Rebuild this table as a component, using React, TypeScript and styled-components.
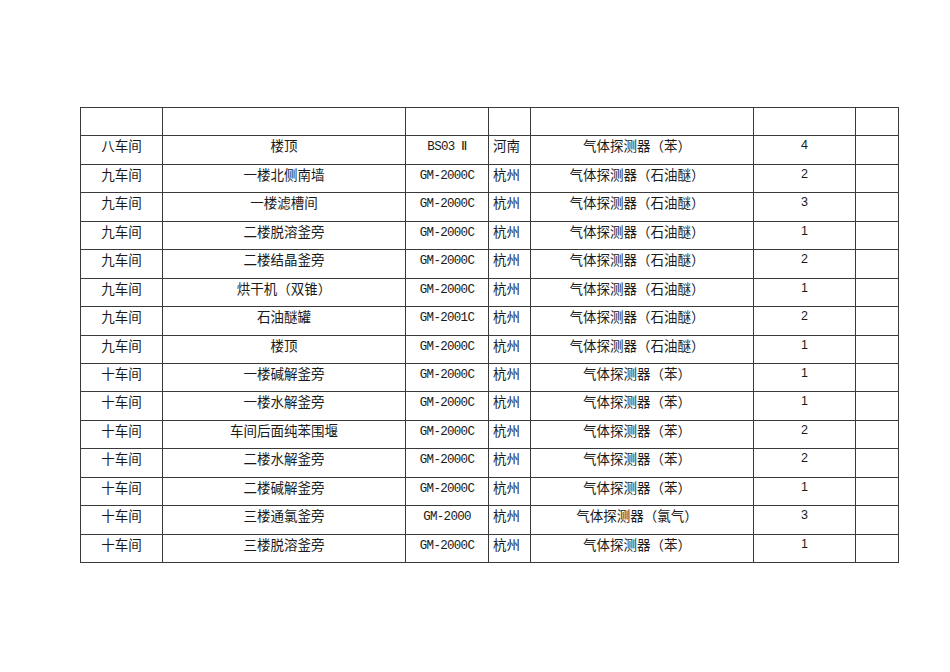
import React from 'react';
import styled, { createGlobalStyle } from 'styled-components';

// == data =========================================================================================
type Row = {
  workshop: string;
  place: string;
  model: string;
  origin: string;
  device: string;
  count: string;
};

const ROWS: Row[] = [
  { workshop: '八车间', place: '楼顶', model: 'BS03 Ⅱ', origin: '河南', device: '气体探测器（苯）', count: '4' },
  { workshop: '九车间', place: '一楼北侧南墙', model: 'GM-2000C', origin: '杭州', device: '气体探测器（石油醚）', count: '2' },
  { workshop: '九车间', place: '一楼滤槽间', model: 'GM-2000C', origin: '杭州', device: '气体探测器（石油醚）', count: '3' },
  { workshop: '九车间', place: '二楼脱溶釜旁', model: 'GM-2000C', origin: '杭州', device: '气体探测器（石油醚）', count: '1' },
  { workshop: '九车间', place: '二楼结晶釜旁', model: 'GM-2000C', origin: '杭州', device: '气体探测器（石油醚）', count: '2' },
  { workshop: '九车间', place: '烘干机（双锥）', model: 'GM-2000C', origin: '杭州', device: '气体探测器（石油醚）', count: '1' },
  { workshop: '九车间', place: '石油醚罐', model: 'GM-2001C', origin: '杭州', device: '气体探测器（石油醚）', count: '2' },
  { workshop: '九车间', place: '楼顶', model: 'GM-2000C', origin: '杭州', device: '气体探测器（石油醚）', count: '1' },
  { workshop: '十车间', place: '一楼碱解釜旁', model: 'GM-2000C', origin: '杭州', device: '气体探测器（苯）', count: '1' },
  { workshop: '十车间', place: '一楼水解釜旁', model: 'GM-2000C', origin: '杭州', device: '气体探测器（苯）', count: '1' },
  { workshop: '十车间', place: '车间后面纯苯围堰', model: 'GM-2000C', origin: '杭州', device: '气体探测器（苯）', count: '2' },
  { workshop: '十车间', place: '二楼水解釜旁', model: 'GM-2000C', origin: '杭州', device: '气体探测器（苯）', count: '2' },
  { workshop: '十车间', place: '二楼碱解釜旁', model: 'GM-2000C', origin: '杭州', device: '气体探测器（苯）', count: '1' },
  { workshop: '十车间', place: '三楼通氯釜旁', model: 'GM-2000', origin: '杭州', device: '气体探测器（氯气）', count: '3' },
  { workshop: '十车间', place: '三楼脱溶釜旁', model: 'GM-2000C', origin: '杭州', device: '气体探测器（苯）', count: '1' },
];

const COLUMN_WIDTHS = [ 82, 243, 83, 42, 223, 102, 43 ];

// == styles =======================================================================================
const GlobalStyle = createGlobalStyle`
  html, body {
    margin: 0;
    padding: 0;
    background: #ffffff;
  }
`;

const Page = styled.div`
  width: 950px;
  height: 672px;
  padding: 107px 0 0 80px;
  box-sizing: border-box;
  font-family: "Noto Sans CJK SC", "Liberation Sans", sans-serif;
  color: #1a1a1a;
  -webkit-font-smoothing: antialiased;
`;

const Sheet = styled.table`
  width: 819px;
  table-layout: fixed;
  border-collapse: collapse;
`;

const Row = styled.tr`
  height: 28.44px;
`;

const Cell = styled.td<{ $align?: 'left' | 'center'; $padRight?: number }>`
  border: 1px solid #3a3a3a;
  padding: 0 ${ ( { $padRight } ) => $padRight ?? 4 }px 0 4px;
  vertical-align: top;
  text-align: ${ ( { $align } ) => $align ?? 'center' };
  font-size: 13.5px;
  line-height: 18px;
  white-space: nowrap;
  overflow: hidden;
`;

const ModelCell = styled( Cell )`
  padding-top: 2px;
  font-family: "Liberation Mono", "DejaVu Sans Mono", monospace;
  font-size: 12.5px;
  letter-spacing: -0.7px;
`;

const CountCell = styled( Cell )`
  font-family: "Liberation Sans", sans-serif;
  font-size: 12.5px;
`;

// == components ===================================================================================
function DataRow( { row }: { row: Row } ): JSX.Element {
  return (
    <Row>
      <Cell>{ row.workshop }</Cell>
      <Cell>{ row.place }</Cell>
      <ModelCell>{ row.model }</ModelCell>
      <Cell $align="left">{ row.origin }</Cell>
      <Cell $padRight={ 14 }>{ row.device }</Cell>
      <CountCell>{ row.count }</CountCell>
      <Cell />
    </Row>
  );
}

export default function App(): JSX.Element {
  return (
    <Page>
      <GlobalStyle />
      <Sheet>
        <colgroup>
          { COLUMN_WIDTHS.map( ( w, i ) => <col key={ i } style={ { width: w } } /> ) }
        </colgroup>
        <tbody>
          <Row>
            { COLUMN_WIDTHS.map( ( _, i ) => <Cell key={ i } /> ) }
          </Row>
          { ROWS.map( ( row, i ) => <DataRow key={ i } row={ row } /> ) }
        </tbody>
      </Sheet>
    </Page>
  );
}
